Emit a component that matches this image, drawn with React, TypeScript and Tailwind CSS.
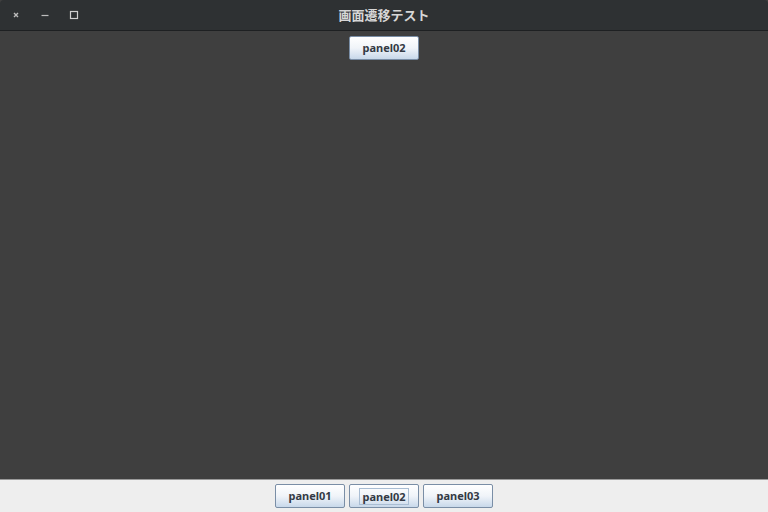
export default function App() {
  const btn =
    "w-[70px] h-[24px] flex items-center justify-center border border-[#7a8ea6] bg-gradient-to-b from-[#ffffff] via-[#f0f4f9] to-[#c8d8ea] text-[11px] font-bold text-[#333a44] rounded-[2px] font-['Noto_Sans',sans-serif]";
  return (
    <div className="w-[768px] h-[512px] flex flex-col bg-[#3f3f3f] overflow-hidden font-['DejaVu_Sans','Noto_Sans_CJK_JP',sans-serif]">
      {/* title bar */}
      <div className="relative h-[31px] bg-[#2e3133] border-b border-[#1e2022] flex items-center justify-center rounded-t-[4px]">
        <div className="absolute left-[11px] top-0 h-full flex items-center gap-[19px]">
          <svg width="10" height="10" viewBox="0 0 10 10">
            <path d="M3 3l4 4M7 3l-4 4" stroke="#bdbdbd" strokeWidth="1.4" />
          </svg>
          <svg width="10" height="10" viewBox="0 0 10 10">
            <path d="M1.5 5.5h7" stroke="#bdbdbd" strokeWidth="1.2" />
          </svg>
          <svg width="10" height="10" viewBox="0 0 10 10">
            <rect x="1.5" y="1.5" width="7" height="7" fill="none" stroke="#d0d0d0" strokeWidth="1.2" />
          </svg>
        </div>
        <span className="text-[13px] font-bold text-[#d6d6d6] font-['Noto_Sans_CJK_JP',sans-serif]">
          画面遷移テスト
        </span>
      </div>

      {/* content */}
      <div className="flex-1 flex justify-center pt-[5px]">
        <div className={btn}>panel02</div>
      </div>

      {/* bottom bar */}
      <div className="h-[33px] bg-[#eeeeee] border-t border-[#9a9a9a] flex justify-center gap-[4px] pt-[4px]">
        <div className={btn}>panel01</div>
        <div className={btn}>
          <span className="border border-[#a9bdd3] px-[2px] leading-[15px]">panel02</span>
        </div>
        <div className={btn}>panel03</div>
      </div>
    </div>
  );
}
